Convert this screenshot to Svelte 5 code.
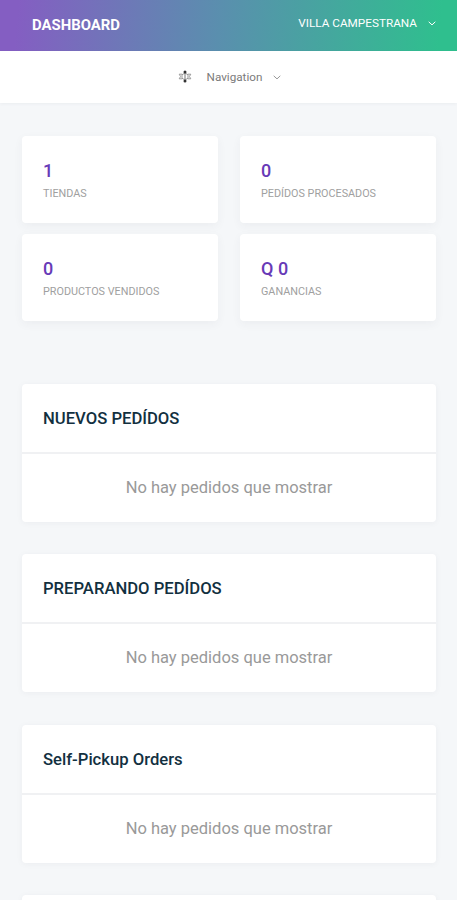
<script>
	const store = 'VILLA CAMPESTRANA';

	const stats = [
		{ value: '1', label: 'TIENDAS' },
		{ value: '0', label: 'PEDÍDOS PROCESADOS' },
		{ value: '0', label: 'PRODUCTOS VENDIDOS' },
		{ value: 'Q 0', label: 'GANANCIAS' }
	];

	const orderLists = [
		{ title: 'NUEVOS PEDÍDOS', orders: [] },
		{ title: 'PREPARANDO PEDÍDOS', orders: [] },
		{ title: 'Self-Pickup Orders', orders: [] }
	];
</script>

<div class="dashboard">
	<header>
		<h1>DASHBOARD</h1>
		<button class="store">
			<span>{store}</span>
			<svg width="8" height="5" viewBox="0 0 8 5">
				<path d="M0.7 0.8 L4 3.9 L7.3 0.8" />
			</svg>
		</button>
	</header>

	<nav>
		<button class="toggle">
			<svg class="gear" width="14" height="13" viewBox="0 0 14 13">
				<path class="arms" d="M7 1.5 V11.5" />
				<path d="M4.2 4.2 H1.2 L2.6 6.5 L1.2 8.8 H4.2 M9.8 4.2 H12.8 L11.4 6.5 L12.8 8.8 H9.8" />
				<path d="M7 3 L10 4.8 V8.2 L7 10 L4 8.2 V4.8 Z" />
				<circle cx="7" cy="2" r="1.5" />
				<circle cx="7" cy="11" r="1.5" />
			</svg>
			<span>Navigation</span>
			<svg class="caret" width="8" height="5" viewBox="0 0 8 5">
				<path d="M0.7 0.8 L4 3.9 L7.3 0.8" />
			</svg>
		</button>
	</nav>

	<main>
		<section class="stats">
			{#each stats as stat}
				<div class="stat">
					<strong>{stat.value}</strong>
					<span>{stat.label}</span>
				</div>
			{/each}
		</section>

		{#each orderLists as list}
			<section class="panel">
				<h2>{list.title}</h2>
				{#if list.orders.length === 0}
					<p>No hay pedidos que mostrar</p>
				{/if}
			</section>
		{/each}
		<section class="panel"></section>
	</main>
</div>

<style>
	:global(body) {
		background: #f5f7f9;
		overflow: hidden;
	}

	.dashboard {
		height: 900px;
		overflow: hidden;
		font-family: Roboto, "Liberation Sans", sans-serif;
		background: #f5f7f9;
	}

	header {
		display: flex;
		justify-content: space-between;
		box-sizing: border-box;
		height: 51px;
		padding: 0 21px 0 32px;
		background: linear-gradient(95deg, #845ec2 4%, #5a8fae 48%, #2fbf8e 96%);
		color: #fff;
	}

	h1 {
		margin: 0;
		font-size: 14.9px;
		font-weight: 700;
		line-height: 51px;
	}

	button {
		display: flex;
		align-items: center;
		padding: 0;
		border: 0;
		background: none;
		font-family: inherit;
		color: inherit;
	}

	svg path {
		fill: none;
		stroke: currentColor;
		stroke-width: 1;
	}

	.store {
		height: 46px;
		gap: 11px;
		font-size: 11.75px;
	}

	nav {
		display: flex;
		justify-content: center;
		height: 52px;
		background: #fff;
		box-shadow: 0 1px 3px rgba(60, 80, 110, 0.06);
	}

	.toggle {
		padding-left: 2px;
		font-size: 11.7px;
		color: #7b7b7b;
	}

	.gear {
		margin: 0 15px 2px 0;
		color: #999;
	}

	.gear circle {
		fill: #333;
	}

	.gear .arms {
		stroke: #777;
	}

	.caret {
		margin-left: 11px;
		color: #999;
	}

	main {
		padding: 33px 21px 0 22px;
	}

	.stats {
		display: grid;
		grid-template-columns: 1fr 1fr;
		gap: 11px 22px;
		margin-bottom: 63px;
	}

	.stat {
		display: flex;
		flex-direction: column;
		box-sizing: border-box;
		height: 87px;
		padding: 24px 21px 0;
		border-radius: 4px;
		background: #fff;
		box-shadow: 0 3px 10px rgba(50, 60, 80, 0.05);
	}

	.stat strong {
		font-size: 18px;
		font-weight: 500;
		line-height: 22px;
		color: #673ab7;
	}

	.stat span {
		font-size: 10.8px;
		line-height: 23px;
		color: #a0a0a0;
	}

	.panel {
		min-height: 138px;
		margin-bottom: 32.3px;
		border-radius: 4px;
		background: #fff;
		box-shadow: 0 1px 6px rgba(50, 60, 80, 0.05);
	}

	h2 {
		margin: 0;
		padding: 1px 0 0 21px;
		border-bottom: 2px solid #f0f1f3;
		font-size: 16.65px;
		font-weight: 500;
		line-height: 67px;
		color: #12303f;
	}

	p {
		margin: 0;
		font-size: 16.5px;
		line-height: 68px;
		text-align: center;
		color: #999;
	}
</style>
